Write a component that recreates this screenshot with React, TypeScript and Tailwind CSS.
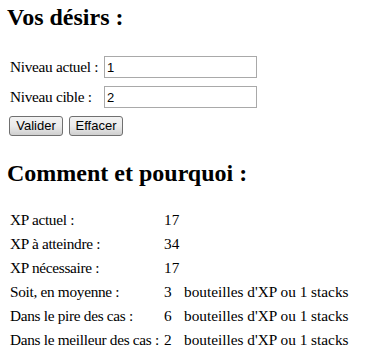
import React from 'react';

const rows: { label: string; value: string; extra?: string }[] = [
  { label: 'XP actuel :', value: '17' },
  { label: 'XP à atteindre :', value: '34' },
  { label: 'XP nécessaire :', value: '17' },
  { label: 'Soit, en moyenne :', value: '3', extra: "bouteilles d'XP ou 1 stacks" },
  { label: 'Dans le pire des cas :', value: '6', extra: "bouteilles d'XP ou 1 stacks" },
  { label: 'Dans le meilleur des cas :', value: '2', extra: "bouteilles d'XP ou 1 stacks" },
];

function Field({ label, value }: { label: string; value: string }) {
  return (
    <div className="flex h-[22px] items-center pl-[2px]">
      <span className="w-[94px] shrink-0 whitespace-nowrap leading-[18px] tracking-[-0.3px]">{label}</span>
      <input
        readOnly
        value={value}
        className="h-[22px] w-[153px] border border-[#a9a9a9] bg-white px-[2px] font-['Liberation_Sans',Arial,sans-serif] text-[13px] text-black outline-none"
      />
    </div>
  );
}

function Btn({ children }: { children: React.ReactNode }) {
  return (
    <button
      type="button"
      className="h-[20px] w-[54px] rounded-[3px] border border-[#707070] bg-gradient-to-b from-[#f2f2f2] via-[#ebebeb] to-[#cfcfcf] font-['Liberation_Sans',Arial,sans-serif] text-[13px] leading-[16px] text-black"
    >
      {children}
    </button>
  );
}

export default function App() {
  return (
    <div className="h-[353px] w-[375px] overflow-hidden bg-white pl-[8px] font-['Liberation_Serif','Times_New_Roman',serif] text-[15.3px] text-black">
      <h2 className="-ml-[1px] pt-[3px] text-[24px] font-bold leading-[28px]">Vos désirs :</h2>

      <form className="mt-[25px] flex flex-col gap-[8px]" onSubmit={(e) => e.preventDefault()}>
        <Field label="Niveau actuel :" value="1" />
        <Field label="Niveau cible :" value="2" />
        <div className="flex gap-[6px] pl-[1px]">
          <Btn>Valider</Btn>
          <Btn>Effacer</Btn>
        </div>
      </form>

      <h2 className="-ml-[1px] mt-[23px] text-[24px] font-bold leading-[28px]">Comment et pourquoi :</h2>

      <div className="mt-[21px] flex flex-col">
        {rows.map((r) => (
          <div key={r.label} className="flex h-[24px] whitespace-nowrap pl-[2px] leading-[24px]">
            <span className="w-[154px] shrink-0 tracking-[-0.3px]">{r.label}</span>
            <span className="w-[20px] shrink-0">{r.value}</span>
            {r.extra && <span>{r.extra}</span>}
          </div>
        ))}
      </div>
    </div>
  );
}
